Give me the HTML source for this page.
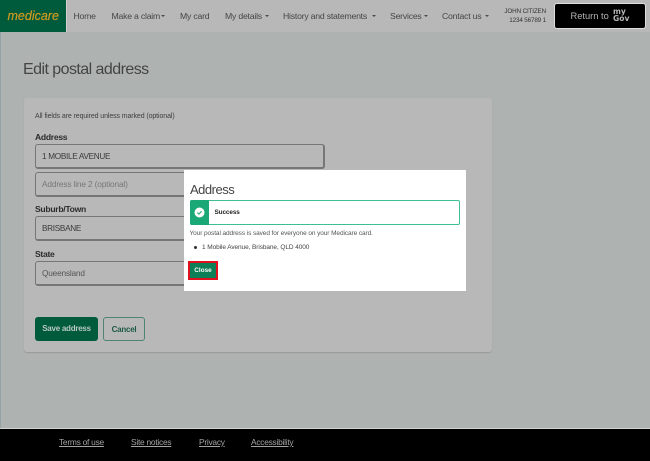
<!DOCTYPE html>
<html>
<head>
<meta charset="utf-8">
<style>
html,body{margin:0;padding:0}
body{width:650px;height:461px;position:relative;overflow:hidden;background:#aeb3b1;font-family:"Liberation Sans",sans-serif;color:#333}
.a{position:absolute;white-space:nowrap}
.nav{font-size:8.7px;color:#454545;top:10px;line-height:12px;letter-spacing:-.22px}
.caret{position:absolute;top:15px;width:0;height:0;border-left:2.5px solid transparent;border-right:2.5px solid transparent;border-top:2.5px solid #4a4a4a}
.label{font-size:8.6px;font-weight:bold;color:#2c2c2c;line-height:12px;left:35px;letter-spacing:-.3px}
.input{left:35px;width:287px;height:22px;border:1px solid #767676;border-bottom-width:2px;border-right-width:2px;border-radius:3px;font-size:8.2px;line-height:23px;text-indent:6px;color:#3a3a3a;letter-spacing:-.3px}
.foot{font-size:8.4px;color:#a2a2a2;text-decoration:underline;top:436px;line-height:12px;letter-spacing:-.25px}
</style>
</head>
<body>
<div class="a" style="left:0;top:32px;width:1px;height:397px;background:#96a3a6"></div>
<div class="a" style="left:0;top:0;width:650px;height:32px;background:#b8b8b8"></div>
<div class="a" style="left:0;top:0;width:66px;height:32px;background:#005a3c;border-right:1px solid #d0d0d0"></div>
<div class="a" style="left:7.5px;top:8px;font-size:12.5px;line-height:16px;font-style:italic;color:#d19a1e;-webkit-text-stroke:.2px #d19a1e">medicare</div>
<div class="a nav" style="left:73.5px">Home</div>
<div class="a nav" style="left:111.5px">Make a claim</div><div class="a caret" style="left:161px"></div>
<div class="a nav" style="left:180px">My card</div>
<div class="a nav" style="left:225px">My details</div><div class="a caret" style="left:264.5px"></div>
<div class="a nav" style="left:283px">History and statements</div><div class="a caret" style="left:372px"></div>
<div class="a nav" style="left:390px">Services</div><div class="a caret" style="left:424px"></div>
<div class="a nav" style="left:442px">Contact us</div><div class="a caret" style="left:485px"></div>
<div class="a" style="left:495px;top:7px;width:51px;text-align:right;font-size:6.3px;line-height:9px;color:#333;letter-spacing:-.15px">JOHN CITIZEN<br>1234 56789 1</div>
<div class="a" style="left:554px;top:3px;width:90px;height:24px;background:#000;border:1px solid #ddd;border-radius:3px"></div>
<div class="a" style="left:570.5px;top:9.5px;font-size:9.3px;line-height:12px;color:#b5b5b5">Return to</div>
<div class="a" style="left:613px;top:7.5px;font-size:7.6px;line-height:7.6px;font-weight:bold;color:#b5b5b5;font-family:'DejaVu Sans',sans-serif">my<br>Gov</div>

<div class="a" style="left:23px;top:60px;font-size:16px;line-height:20px;color:#444;letter-spacing:-.55px">Edit postal address</div>

<div class="a" style="left:24px;top:98px;width:468px;height:254px;background:#b8b8b8;border-radius:3px;box-shadow:0 1px 1px #999"></div>
<div class="a" style="left:35px;top:112px;font-size:7px;line-height:10px;color:#3e3e3e;letter-spacing:-.1px">All fields are required unless marked (optional)</div>
<div class="a label" style="top:130.5px">Address</div>
<div class="a input" style="top:144px">1 MOBILE AVENUE</div>
<div class="a input" style="top:172px;color:#777;font-size:8.3px;letter-spacing:-.15px">Address line 2 (optional)</div>
<div class="a label" style="top:202.5px">Suburb/Town</div>
<div class="a input" style="top:216px">BRISBANE</div>
<div class="a label" style="top:247.5px">State</div>
<div class="a input" style="top:261px;color:#555;font-size:8.3px;letter-spacing:-.2px">Queensland</div>
<div class="a" style="left:35px;top:317px;width:63px;height:24px;background:#005a3c;border-radius:3px;color:#b8c8c0;font-size:8px;font-weight:bold;line-height:24px;text-align:center;letter-spacing:-.25px">Save address</div>
<div class="a" style="left:103px;top:317px;width:40px;height:22px;border:1px solid #4f8570;border-radius:3px;color:#1f5a46;font-size:8px;font-weight:bold;line-height:23px;text-align:center;letter-spacing:-.25px">Cancel</div>

<div class="a" style="left:184px;top:170px;width:282px;height:121px;background:#fff"></div>
<div class="a" style="left:190px;top:182px;font-size:13px;line-height:16px;color:#444;letter-spacing:-.5px">Address</div>
<div class="a" style="left:190px;top:200px;width:268px;height:23px;border:1px solid #3fbf90;border-radius:2px;background:#fff"></div>
<div class="a" style="left:190px;top:200px;width:19px;height:25px;background:#1aa876;border-radius:2px 0 0 2px"></div>
<svg class="a" style="left:194px;top:207px" width="11" height="11" viewBox="0 0 11 11"><circle cx="5.5" cy="5.5" r="5" fill="#fff"/><path d="M3.4 5.6L4.9 7.1L7.6 4.2" fill="none" stroke="#1aa876" stroke-width="1.1"/></svg>
<div class="a" style="left:214.5px;top:208px;font-size:6.4px;line-height:10px;font-weight:bold;color:#222;letter-spacing:-.1px">Success</div>
<div class="a" style="left:189.5px;top:229px;font-size:6.5px;line-height:10px;color:#555;letter-spacing:-.09px">Your postal address is saved for everyone on your Medicare card.</div>
<div class="a" style="left:194px;top:246px;width:3px;height:3px;border-radius:50%;background:#333"></div>
<div class="a" style="left:202px;top:243px;font-size:6.5px;line-height:10px;color:#444;letter-spacing:-.09px">1 Mobile Avenue, Brisbane, QLD 4000</div>
<div class="a" style="left:188px;top:261px;width:26px;height:15px;border:2px solid #e0101e;background:#0c7f56;color:#fff;font-size:6.4px;font-weight:bold;line-height:16px;text-align:center">Close</div>

<div class="a" style="left:0;top:428px;width:650px;height:1px;background:#cfd2d1"></div>
<div class="a" style="left:0;top:429px;width:650px;height:32px;background:#000"></div>
<div class="a foot" style="left:59px">Terms of use</div>
<div class="a foot" style="left:131px">Site notices</div>
<div class="a foot" style="left:199px">Privacy</div>
<div class="a foot" style="left:251px">Accessibility</div>
</body>
</html>
